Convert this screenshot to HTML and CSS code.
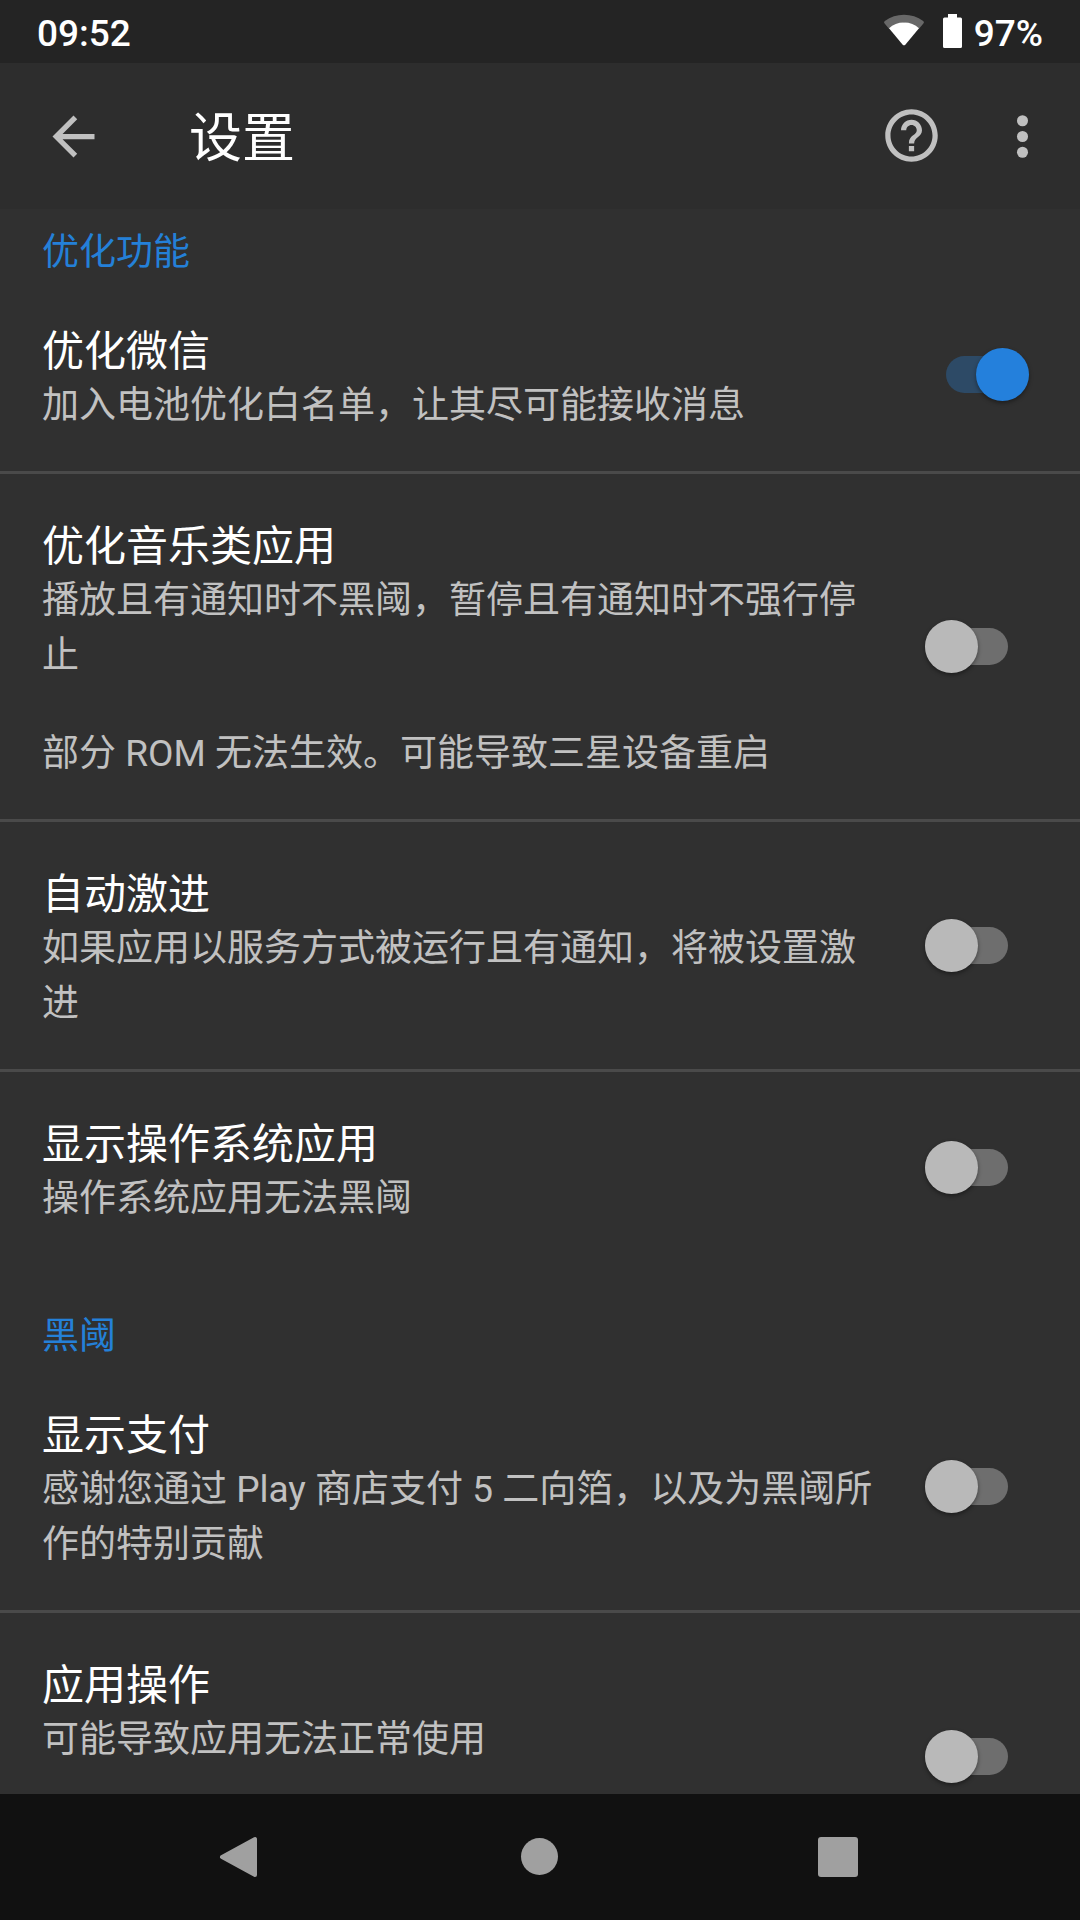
FILE: index.html
```html
<!DOCTYPE html>
<html lang="zh-CN">
<head>
<meta charset="utf-8">
<title>设置</title>
<link rel="stylesheet" href="styles.css">
</head>
<body>
<div class="status-bar">
  <span class="clock">09:52</span>
  <div class="status-icons">
    <svg class="wifi" width="42" height="34" viewBox="0 0 42 34">
      <path d="M1.6 9.5Q.3 8 1.8 6.9Q10.4.8 21 .8T40.2 6.9Q41.7 8 40.4 9.5L36 14.8L21 8.500L6 14.800Z" fill="#686868"/>
      <path d="M6 14.200Q12 8.600 21 8.600T36 14.200L22.300 30.700Q21 32 19.700 30.700Z" fill="#fff"/>
    </svg>
    <svg class="battery" width="19" height="34" viewBox="0 0 19 34">
      <path d="M5 0h9v3.500h3.500Q19 3.500 19 5v27.500Q19 34 17.500 34h-16Q0 34 0 32.500V5Q0 3.500 1.500 3.500H5Z" fill="#fff"/>
    </svg>
    <span class="percent">97%</span>
  </div>
</div>
<header class="app-bar">
  <svg class="icon" viewBox="0 0 24 24"><path d="M20 11H7.830l5.590-5.590L12 4l-8 8 8 8 1.410-1.410L7.830 13H20v-2z"/></svg>
  <h1 class="app-title">设置</h1>
  <svg class="icon help" viewBox="0 0 24 24"><path d="M11 18h2v-2h-2v2zm1-16C6.480 2 2 6.480 2 12s4.480 10 10 10 10-4.480 10-10S17.520 2 12 2zm0 18c-4.410 0-8-3.590-8-8s3.590-8 8-8 8 3.590 8 8-3.590 8-8 8zm0-14c-2.210 0-4 1.790-4 4h2c0-1.100.900-2 2-2s2 .900 2 2c0 2-3 1.750-3 5h2c0-2.250 3-2.500 3-5 0-2.210-1.790-4-4-4z"/></svg>
  <svg class="icon more" viewBox="0 0 24 24"><circle cx="12" cy="6" r="2.100"/><circle cx="12" cy="12" r="2.100"/><circle cx="12" cy="18" r="2.100"/></svg>
</header>
<main class="settings">
  <h2 class="section first">优化功能</h2>
  <section class="row">
    <div class="text"><div class="title">优化微信</div><div class="desc">加入电池优化白名单，让其尽可能接收消息</div></div>
    <div class="switch on"></div>
  </section>
  <section class="row divided">
    <div class="text"><div class="title">优化音乐类应用</div><div class="desc">播放且有通知时不黑阈，暂停且有通知时不强行停<br>止</div><div class="desc note">部分 ROM 无法生效。可能导致三星设备重启</div></div>
    <div class="switch"></div>
  </section>
  <section class="row divided">
    <div class="text"><div class="title">自动激进</div><div class="desc">如果应用以服务方式被运行且有通知，将被设置激<br>进</div></div>
    <div class="switch"></div>
  </section>
  <section class="row divided">
    <div class="text"><div class="title">显示操作系统应用</div><div class="desc">操作系统应用无法黑阈</div></div>
    <div class="switch"></div>
  </section>
  <h2 class="section">黑阈</h2>
  <section class="row">
    <div class="text"><div class="title">显示支付</div><div class="desc">感谢您通过 Play 商店支付 5 二向箔，以及为黑阈所<br>作的特别贡献</div></div>
    <div class="switch"></div>
  </section>
  <section class="row divided tall">
    <div class="text"><div class="title">应用操作</div><div class="desc">可能导致应用无法正常使用</div></div>
    <div class="switch"></div>
  </section>
</main>
<nav class="nav-bar">
  <svg width="44" height="44" viewBox="0 0 44 44"><path d="M4 22L37 4V40Z" stroke-width="4" stroke-linejoin="round"/></svg>
  <svg width="44" height="44" viewBox="0 0 44 44"><circle cx="22.500" cy="21.500" r="18.500"/></svg>
  <svg width="44" height="44" viewBox="0 0 44 44"><rect x="2" y="2" width="40" height="40" rx="3"/></svg>
</nav>
</body>
</html>
```
FILE: styles.css
```css
* { box-sizing: border-box; }

body {
  margin: 0;
  width: 1080px;
  height: 1920px;
  overflow: hidden;
  display: flex;
  flex-direction: column;
  background: #303030;
  color: #fff;
  font-family: Roboto, "Noto Sans CJK SC", sans-serif;
}

h1, h2 { margin: 0; font-weight: 400; }

.status-bar {
  flex: none;
  height: 63px;
  padding: 0 37px 0 37px;
  display: flex;
  justify-content: space-between;
  background: #242424;
  font-size: 37px;
  font-weight: 500;
  line-height: 68px;
}

.status-icons { display: flex; align-items: flex-start; }
.wifi { margin: 14px 18px 0 0; }
.battery { margin: 14px 12px 0 0; }

.app-bar {
  flex: none;
  height: 146px;
  padding: 1px 26px 0 42px;
  display: flex;
  align-items: center;
  background: #2d2d2d;
}

.icon { width: 63px; height: 63px; fill: #c0c0c0; }
.help { margin: 0 48px 2px 0; }

.app-title {
  flex: 1;
  padding: 4px 0 0 84px;
  font-size: 53px;
  line-height: 76px;
}

.settings { flex: 1; min-height: 0; overflow: hidden; }

.section {
  height: 99px;
  padding: 46px 42px 0;
  color: #2480d8;
  font-size: 37px;
  line-height: 54px;
}

.section.first { height: 70px; padding-top: 17px; }

.row {
  padding: 46px 72px 38px 42px;
  display: flex;
  align-items: center;
  justify-content: space-between;
}

.row.divided { border-top: 3px solid #4a4a4a; }
.row.tall { height: 291px; }
.row.tall .text { align-self: flex-start; }

.text { white-space: nowrap; }
.title { height: 53px; font-size: 42px; line-height: 54px; }
.desc { font-size: 37px; line-height: 55px; color: #c1c1c1; }
.desc.note { padding-top: 43px; }

.switch {
  flex: none;
  width: 83px;
  height: 37px;
  margin-bottom: 9px;
  border-radius: 19px;
  display: flex;
  align-items: center;
  background: #6e6e6e;
}

.switch::before {
  content: "";
  flex: none;
  width: 53px;
  height: 53px;
  border-radius: 50%;
  background: #b9b9b9;
  box-shadow: 0 2px 4px rgba(0, 0, 0, .4);
}

.switch.on {
  margin-right: -21px;
  justify-content: flex-end;
  background: #2d4a66;
}

.switch.on::before { background: #2480dc; }

.nav-bar {
  flex: none;
  height: 126px;
  padding: 0 220px 0 218px;
  display: flex;
  align-items: center;
  justify-content: space-between;
  background: #111;
}

.nav-bar svg { fill: #a0a0a0; stroke: none; }
.nav-bar path { stroke: #a0a0a0; }
```
